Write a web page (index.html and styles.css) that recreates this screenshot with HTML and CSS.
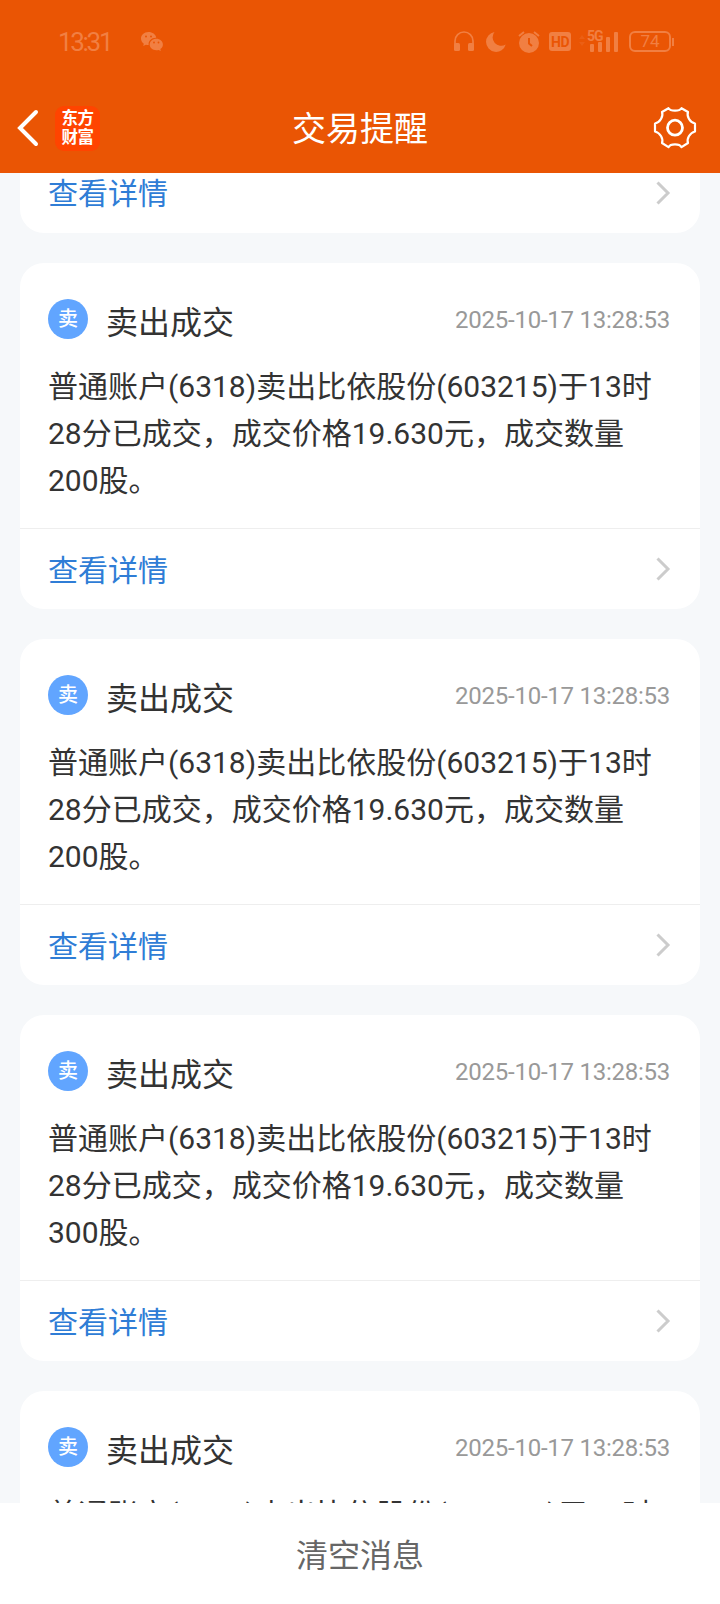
FILE: index.html
```html
<!DOCTYPE html>
<html lang="zh-CN">

<head>
    <meta charset="UTF-8">
    <meta name="viewport" content="width=device-width, initial-scale=1.0">
    <title>交易提醒</title>
    <link rel="stylesheet" href="styles.css">
</head>

<body>
    <header class="header">
        <div class="status-bar">
            <span class="clock">13:31</span>
            <svg class="wechat" width="24" height="22" viewBox="0 0 24 22">
                <path fill="currentColor" d="M8.500 1C4 1 1 4 1 7.500c0 2.200 1.100 4 2.800 5.200L3.200 15l2.700-1.300c1 .3 1.800.4 2.800.4C8 10 11.500 6.500 16.300 6.700 15.600 3.300 12.500 1 8.500 1z" />
                <path fill="currentColor" d="M16.300 7.800c-3.800 0-6.600 2.500-6.600 5.700s2.800 5.700 6.600 5.700c.8 0 1.600-.1 2.300-.3l2.300 1.200-.6-2c1.600-1 2.600-2.700 2.600-4.600 0-3.200-2.800-5.700-6.600-5.700z" />
                <g fill="#ea5504">
                    <circle cx="6" cy="5.500" r="1" />
                    <circle cx="11" cy="5.500" r="1" />
                    <circle cx="14" cy="11.500" r=".9" />
                    <circle cx="18.500" cy="11.500" r=".9" />
                </g>
            </svg>
            <div class="status-icons">
                <svg width="20" height="22" viewBox="0 0 20 22">
                    <path d="M1 15V10a9 9 0 0 1 18 0v5" fill="none" stroke="currentColor" stroke-width="1.700" />
                    <rect x="0" y="12" width="6" height="8" rx="1.500" fill="currentColor" />
                    <rect x="14" y="12" width="6" height="8" rx="1.500" fill="currentColor" />
                </svg>
                <svg width="20" height="22" viewBox="0 0 20 22">
                    <path d="M8.500 1A10 10 0 1 0 19.700 13.500 8.500 8.500 0 0 1 8.500 1z" fill="currentColor" />
                </svg>
                <svg width="22" height="22" viewBox="0 0 22 22">
                    <circle cx="11" cy="12" r="10" fill="currentColor" />
                    <path d="M1 5l5-4M21 5l-5-4" stroke="currentColor" stroke-width="2" />
                    <path d="M11 7v5.500l3 2.500" fill="none" stroke="#ea5504" stroke-width="2" />
                </svg>
                <span class="hd">HD</span>
                <svg class="signal" width="41" height="23" viewBox="0 0 41 23">
                    <path d="M0 9l3-4 3 4zM0 12l3 4 3-4z" fill="currentColor" opacity=".25" />
                    <text class="signal-text" x="8" y="11">5G</text>
                    <g fill="currentColor">
                        <rect x="11" y="14" width="4" height="8" rx="1" />
                        <rect x="19" y="12" width="4" height="10" rx="1" />
                        <rect x="27" y="7" width="4" height="15" rx="1" />
                        <rect x="35" y="2" width="4" height="20" rx="1" />
                    </g>
                </svg>
                <div class="battery">74</div>
            </div>
        </div>
        <nav class="nav">
            <div class="nav-left">
                <svg width="22" height="38" viewBox="0 0 22 38">
                    <path d="M19 3L3 19l16 16" fill="none" stroke="#fff" stroke-width="4" stroke-linecap="round" />
                </svg>
                <div class="logo">东方<br>财富</div>
            </div>
            <h1>交易提醒</h1>
            <svg class="gear" width="44" height="44" viewBox="0 0 44 44" fill="none" stroke="#fff" stroke-width="2.200" stroke-linejoin="round">
                <path d="M15.500 2.200C17.500 5.500 26.500 5.500 28.500 2.200L35 6C33.500 10 36.500 16 42 17.500V25.500C36.500 27 33.500 33 35 37L28.500 41.200C26.500 37.500 17.500 37.500 15.500 41.200L9 37C10.500 33 7.500 27 2 25.500V17.500C7.500 16 10.500 10 9 6Z" />
                <circle cx="22" cy="21.700" r="7.500" stroke-width="2.800" />
            </svg>
        </nav>
    </header>

    <main class="list">
        <section class="card card-cut">
            <a class="card-link"><span>查看详情</span>
                <svg width="16" height="26" viewBox="0 0 16 26"><path d="M2.500 2.500L13 13 2.500 23.500" /></svg>
            </a>
        </section>

        <section class="card">
            <div class="card-head">
                <span class="tag">卖</span>
                <h2>卖出成交</h2>
                <time>2025-10-17 13:28:53</time>
            </div>
            <p>普通账户(6318)卖出比依股份(603215)于13时28分已成交，成交价格19.630元，成交数量200股。</p>
            <a class="card-link"><span>查看详情</span>
                <svg width="16" height="26" viewBox="0 0 16 26"><path d="M2.500 2.500L13 13 2.500 23.500" /></svg>
            </a>
        </section>

        <section class="card">
            <div class="card-head">
                <span class="tag">卖</span>
                <h2>卖出成交</h2>
                <time>2025-10-17 13:28:53</time>
            </div>
            <p>普通账户(6318)卖出比依股份(603215)于13时28分已成交，成交价格19.630元，成交数量200股。</p>
            <a class="card-link"><span>查看详情</span>
                <svg width="16" height="26" viewBox="0 0 16 26"><path d="M2.500 2.500L13 13 2.500 23.500" /></svg>
            </a>
        </section>

        <section class="card">
            <div class="card-head">
                <span class="tag">卖</span>
                <h2>卖出成交</h2>
                <time>2025-10-17 13:28:53</time>
            </div>
            <p>普通账户(6318)卖出比依股份(603215)于13时28分已成交，成交价格19.630元，成交数量300股。</p>
            <a class="card-link"><span>查看详情</span>
                <svg width="16" height="26" viewBox="0 0 16 26"><path d="M2.500 2.500L13 13 2.500 23.500" /></svg>
            </a>
        </section>

        <section class="card">
            <div class="card-head">
                <span class="tag">卖</span>
                <h2>卖出成交</h2>
                <time>2025-10-17 13:28:53</time>
            </div>
            <p>普通账户(6318)卖出比依股份(603215)于13时</p>
        </section>
    </main>

    <footer class="clear">清空消息</footer>
</body>

</html>
```

FILE: styles.css
```css
* {
    padding: 0;
    margin: 0;
    box-sizing: border-box;
}

body {
    display: flex;
    flex-direction: column;
    height: 1604px;
    overflow: hidden;
    background: #f6f8fa;
    color: #333;
    font-family: Roboto, 'Noto Sans CJK SC', sans-serif;
}

svg {
    display: block;
    flex-shrink: 0;
}

.header {
    height: 173px;
    flex-shrink: 0;
    background: #ea5504;
    color: #fff;
}

.status-bar {
    display: flex;
    align-items: center;
    height: 83px;
    padding: 0 49px 0 58px;
    color: #f17f42;
}

.clock {
    width: 82px;
    font-size: 26px;
    letter-spacing: -2.3px;
}

.status-icons {
    display: flex;
    align-items: center;
    margin-left: auto;
}

.status-icons > * {
    margin-right: 12px;
}

.status-icons > :last-child {
    margin-right: 0;
}

.status-icons > :nth-child(3) {
    margin-right: 9px;
}

.hd {
    width: 22px;
    height: 19px;
    border-radius: 3px;
    background: #f17f42;
    color: #ea5504;
    font-size: 14px;
    font-weight: 700;
    line-height: 20px;
    text-align: center;
    letter-spacing: -.5px;
}

.status-icons .hd {
    margin-right: 8px;
}

.status-icons .signal {
    margin-right: 9px;
}

.signal-text {
    fill: currentColor;
    font-size: 14px;
    font-weight: 700;
    letter-spacing: -1px;
}

.battery {
    position: relative;
    width: 42px;
    height: 21px;
    border: 2px solid #f17f42;
    border-radius: 6px;
    font-size: 17px;
    line-height: 17px;
    text-align: center;
}

.battery::after {
    content: '';
    position: absolute;
    right: -5px;
    top: 5px;
    width: 2px;
    height: 8px;
    background: #f17f42;
}

.nav {
    display: grid;
    grid-template-columns: 1fr auto 1fr;
    align-items: center;
    height: 90px;
    padding: 0 23px 0 17px;
}

.nav-left {
    display: flex;
    align-items: center;
    gap: 16px;
}

.logo {
    width: 45px;
    height: 45px;
    padding-top: 3px;
    border-radius: 9px;
    background: #ff4400;
    font-size: 16.5px;
    font-weight: 700;
    line-height: 19px;
    text-align: center;
    letter-spacing: -.5px;
}

.nav h1 {
    padding: 0 0 3px 6px;
    font-size: 34px;
    font-weight: 400;
}

.gear {
    justify-self: end;
}

.list {
    flex: 1;
    min-height: 0;
    overflow: hidden;
    padding: 0 20px;
}

.card {
    height: 346px;
    margin-bottom: 30px;
    display: flex;
    flex-direction: column;
    border-radius: 24px;
    background: #fff;
}

.card-cut {
    height: 60px;
    border-radius: 0 0 24px 24px;
    justify-content: flex-end;
}

.card-head {
    display: flex;
    align-items: center;
    height: 40px;
    margin: 36px 30px 0 28px;
}

.tag {
    width: 40px;
    height: 40px;
    border-radius: 50%;
    background: #61a5ff;
    color: #fff;
    font-size: 20px;
    font-weight: 500;
    line-height: 40px;
    text-align: center;
}

.card-head h2 {
    margin: 7px 0 0 18px;
    font-size: 32px;
    font-weight: 400;
    line-height: 40px;
}

.card-head time {
    margin: 2px 0 0 auto;
    color: #999;
    font-size: 24px;
    letter-spacing: -.25px;
}

.card p {
    margin: 24px 28px;
    font-size: 30px;
    line-height: 47px;
}

.card-link {
    display: flex;
    align-items: center;
    justify-content: space-between;
    height: 81px;
    flex-shrink: 0;
    padding: 0 29px 0 28px;
    border-top: 1px solid #eee;
    color: #2f7dd6;
    font-size: 30px;
}

.card-link span {
    padding-bottom: 3px;
}

.card-cut .card-link {
    border-top: 0;
}

.card-link path {
    fill: none;
    stroke: #ccc;
    stroke-width: 3;
}

.clear {
    height: 101px;
    flex-shrink: 0;
    background: #fff;
    color: #666;
    font-size: 32px;
    line-height: 106px;
    text-align: center;
}
```
